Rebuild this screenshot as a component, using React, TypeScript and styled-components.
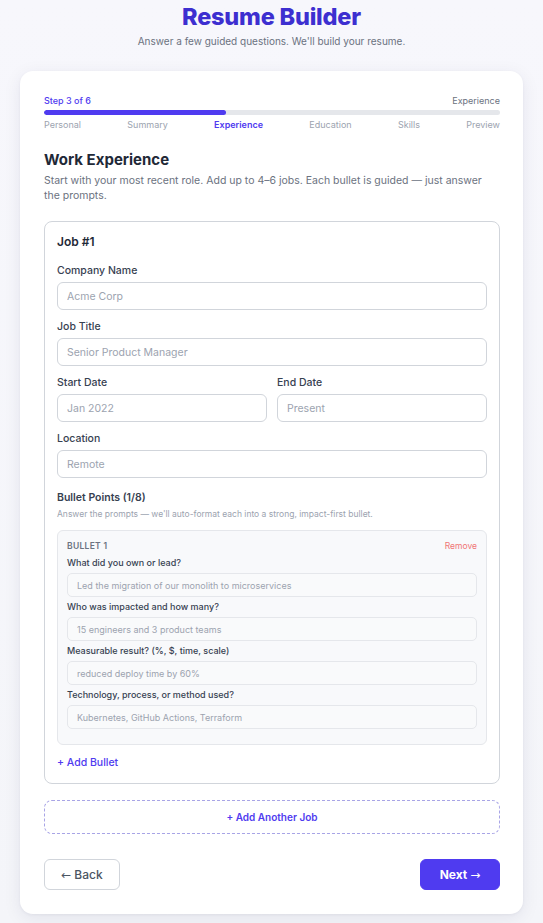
import React from "react";
import styled, { createGlobalStyle } from "styled-components";

const Global = createGlobalStyle`
  html, body { margin: 0; padding: 0; }
  body {
    background: linear-gradient(180deg, #f7f7fc 0%, #f4f5f9 100%);
    font-family: Inter, "Noto Sans", "Liberation Sans", sans-serif;
    color: #1f2937;
    min-height: 923px;
  }
  * { box-sizing: border-box; }
`;

const Page = styled.div`
  padding: 3px 20px 10px;
`;

const Header = styled.header`
  display: flex;
  flex-direction: column;
  align-items: center;
`;

const Title = styled.h1`
  margin: 0;
  font-size: 23.5px;
  line-height: 27px;
  font-weight: 800;
  color: #3d2fd0;
  letter-spacing: -0.2px;
`;

const Subtitle = styled.p`
  margin: 4px 0 0;
  font-size: 10px;
  line-height: 14px;
  color: #6b7280;
`;

const Card = styled.main`
  margin-top: 23px;
  background: #fff;
  border-radius: 13px;
  padding: 24px 23px 24px 24px;
  box-shadow: 0 4px 18px rgba(30, 30, 80, 0.08), 0 1px 3px rgba(30, 30, 80, 0.05);
`;

const ProgressTop = styled.div`
  display: flex;
  justify-content: space-between;
  font-size: 9px;
  line-height: 12px;
`;

const StepCount = styled.span`
  color: #4f3bf0;
  font-weight: 500;
`;

const StepName = styled.span`
  color: #6b7280;
`;

const Track = styled.div`
  margin-top: 3px;
  height: 5px;
  border-radius: 3px;
  background: #e5e7eb;
  overflow: hidden;
`;

const Fill = styled.div`
  height: 100%;
  border-radius: 3px;
  background: #4f3bf0;
`;

const Steps = styled.div`
  margin-top: 4px;
  display: flex;
  justify-content: space-between;
  font-size: 9px;
  line-height: 12px;
`;

const Step = styled.span<{ $active?: boolean }>`
  color: ${(p) => (p.$active ? "#4f3bf0" : "#9ca3af")};
  font-weight: ${(p) => (p.$active ? 600 : 400)};
`;

const SectionTitle = styled.h2`
  margin: 19px 0 0;
  font-size: 15px;
  line-height: 20px;
  font-weight: 700;
  color: #1f2937;
`;

const SectionDesc = styled.p`
  margin: 3px 0 0;
  font-size: 10.5px;
  line-height: 15px;
  color: #6b7280;
`;

const JobBox = styled.section`
  margin-top: 18px;
  border: 1px solid #d1d5db;
  border-radius: 8px;
  padding: 12px 12px 13px;
`;

const JobTitle = styled.h3`
  margin: 0;
  font-size: 12px;
  line-height: 16px;
  font-weight: 600;
  color: #1f2937;
`;

const Fields = styled.div`
  margin-top: 14px;
  display: flex;
  flex-direction: column;
  gap: 10px;
`;

const Row = styled.div`
  display: grid;
  grid-template-columns: 1fr 1fr;
  gap: 10px;
`;

const Field = styled.label`
  display: flex;
  flex-direction: column;
  gap: 4px;
`;

const Label = styled.span`
  font-size: 10.5px;
  line-height: 14px;
  font-weight: 500;
  color: #374151;
`;

const Input = styled.input`
  height: 28px;
  border: 1px solid #d1d5db;
  border-radius: 6px;
  padding: 0 9px;
  font-family: inherit;
  font-size: 10.5px;
  color: #1f2937;
  background: #fff;
  outline: none;
  &::placeholder { color: #9ca3af; }
`;

const BulletsTitle = styled.h4`
  margin: 13px 0 0;
  font-size: 10.5px;
  line-height: 14px;
  font-weight: 600;
  color: #374151;
`;

const BulletsHint = styled.p`
  margin: 3px 0 0;
  font-size: 8.5px;
  line-height: 12px;
  color: #9ca3af;
`;

const BulletBox = styled.div`
  margin-top: 10px;
  background: #f8f9fb;
  border: 1px solid #e5e7eb;
  border-radius: 6px;
  padding: 9px 9px 15px;
  display: flex;
  flex-direction: column;
  gap: 4px;
`;

const BulletHead = styled.div`
  display: flex;
  justify-content: space-between;
  align-items: center;
  line-height: 12px;
  margin-bottom: 1px;
`;

const BulletTag = styled.span`
  font-size: 8.5px;
  font-weight: 600;
  letter-spacing: 0.3px;
  color: #6b7280;
`;

const Remove = styled.button`
  border: 0;
  background: none;
  padding: 0;
  font-family: inherit;
  font-size: 8.5px;
  line-height: 12px;
  color: #f07575;
  cursor: pointer;
`;

const Question = styled.label`
  display: flex;
  flex-direction: column;
  gap: 4px;
`;

const QLabel = styled.span`
  font-size: 9px;
  line-height: 12px;
  font-weight: 500;
  color: #374151;
`;

const QInput = styled.input`
  height: 24px;
  border: 1px solid #e5e7eb;
  border-radius: 5px;
  padding: 0 9px;
  font-family: inherit;
  font-size: 9px;
  color: #1f2937;
  background: #f9fafb;
  outline: none;
  &::placeholder { color: #9ca3af; }
`;

const LinkButton = styled.button`
  margin-top: 11px;
  align-self: flex-start;
  border: 0;
  background: none;
  padding: 0;
  font-family: inherit;
  font-size: 10.5px;
  line-height: 14px;
  font-weight: 500;
  color: #4f3bf0;
  cursor: pointer;
`;

const AddJob = styled.button`
  margin-top: 16px;
  width: 100%;
  height: 34px;
  border: 1px dashed #a8a4e6;
  border-radius: 8px;
  background: #fff;
  font-family: inherit;
  font-size: 10px;
  font-weight: 600;
  color: #4f3bf0;
  cursor: pointer;
`;

const Nav = styled.nav`
  margin-top: 25px;
  display: flex;
  justify-content: space-between;
`;

const NavButton = styled.button<{ $primary?: boolean }>`
  height: 31px;
  width: ${(p) => (p.$primary ? "80px" : "76px")};
  padding: 0;
  border-radius: 6px;
  border: 1px solid ${(p) => (p.$primary ? "#4f3bf0" : "#d1d5db")};
  background: ${(p) => (p.$primary ? "#4f3bf0" : "#fff")};
  color: ${(p) => (p.$primary ? "#fff" : "#4b5563")};
  font-family: inherit;
  font-size: 12px;
  font-weight: ${(p) => (p.$primary ? 700 : 500)};
  display: inline-flex;
  align-items: center;
  justify-content: center;
  gap: 3px;
  cursor: pointer;
`;

const Arrow = styled.span`
  font-family: "DejaVu Sans", sans-serif;
  font-weight: 400;
  font-size: 12px;
`;

const steps = ["Personal", "Summary", "Experience", "Education", "Skills", "Preview"];

const questions = [
  ["What did you own or lead?", "Led the migration of our monolith to microservices"],
  ["Who was impacted and how many?", "15 engineers and 3 product teams"],
  ["Measurable result? (%, $, time, scale)", "reduced deploy time by 60%"],
  ["Technology, process, or method used?", "Kubernetes, GitHub Actions, Terraform"],
];

export default function App() {
  const current = 2;
  const pct = (current / (steps.length - 1)) * 100;
  return (
    <>
      <Global />
      <Page>
        <Header>
          <Title>Resume Builder</Title>
          <Subtitle>Answer a few guided questions. We'll build your resume.</Subtitle>
        </Header>
        <Card>
          <ProgressTop>
            <StepCount>Step 3 of 6</StepCount>
            <StepName>Experience</StepName>
          </ProgressTop>
          <Track>
            <Fill style={{ width: `${pct}%` }} />
          </Track>
          <Steps>
            {steps.map((s, i) => (
              <Step key={s} $active={i === current}>
                {s}
              </Step>
            ))}
          </Steps>

          <SectionTitle>Work Experience</SectionTitle>
          <SectionDesc>
            Start with your most recent role. Add up to 4–6 jobs. Each bullet is guided — just answer the prompts.
          </SectionDesc>

          <JobBox>
            <JobTitle>Job #1</JobTitle>
            <Fields>
              <Field>
                <Label>Company Name</Label>
                <Input placeholder="Acme Corp" />
              </Field>
              <Field>
                <Label>Job Title</Label>
                <Input placeholder="Senior Product Manager" />
              </Field>
              <Row>
                <Field>
                  <Label>Start Date</Label>
                  <Input placeholder="Jan 2022" />
                </Field>
                <Field>
                  <Label>End Date</Label>
                  <Input placeholder="Present" />
                </Field>
              </Row>
              <Field>
                <Label>Location</Label>
                <Input placeholder="Remote" />
              </Field>
            </Fields>
            <BulletsTitle>Bullet Points (1/8)</BulletsTitle>
            <BulletsHint>Answer the prompts — we'll auto-format each into a strong, impact-first bullet.</BulletsHint>
            <BulletBox>
              <BulletHead>
                <BulletTag>BULLET 1</BulletTag>
                <Remove>Remove</Remove>
              </BulletHead>
              {questions.map(([q, ph]) => (
                <Question key={q}>
                  <QLabel>{q}</QLabel>
                  <QInput placeholder={ph} />
                </Question>
              ))}
            </BulletBox>
            <LinkButton>+ Add Bullet</LinkButton>
          </JobBox>

          <AddJob>+ Add Another Job</AddJob>

          <Nav>
            <NavButton>
              <Arrow>←</Arrow> Back
            </NavButton>
            <NavButton $primary>
              Next <Arrow>→</Arrow>
            </NavButton>
          </Nav>
        </Card>
      </Page>
    </>
  );
}
